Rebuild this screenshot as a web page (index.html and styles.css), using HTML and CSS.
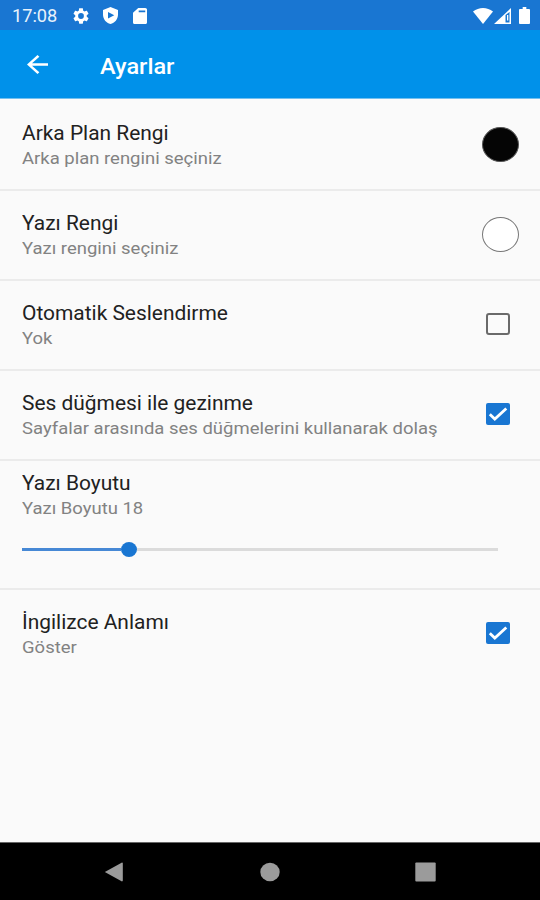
FILE: index.html
```html
<!DOCTYPE html>
<html lang="tr">
<head>
<meta charset="utf-8">
<title>Ayarlar</title>
<link rel="stylesheet" href="styles.css">
</head>
<body>
<div class="screen">
  <header class="status">
    <span class="clock"><span class="wide">17:08</span></span>
    <svg class="gear" viewBox="2 2 20 20" preserveAspectRatio="none"><path d="M19.14 12.94c.04-.3.06-.61.06-.94 0-.32-.02-.64-.07-.94l2.03-1.58c.18-.14.23-.41.12-.61l-1.92-3.32c-.12-.22-.37-.29-.59-.22l-2.39.96c-.5-.38-1.03-.7-1.62-.94l-.36-2.54c-.04-.24-.24-.41-.48-.41h-3.84c-.24 0-.43.17-.47.41l-.36 2.54c-.59.24-1.13.57-1.62.94l-2.39-.96c-.22-.08-.47 0-.59.22L2.74 8.87c-.12.21-.08.47.12.61l2.03 1.58c-.05.3-.09.63-.09.94s.02.64.07.94l-2.03 1.58c-.18.14-.23.41-.12.61l1.92 3.32c.12.22.37.29.59.22l2.39-.96c.5.38 1.03.7 1.62.94l.36 2.54c.05.24.24.41.48.41h3.84c.24 0 .44-.17.47-.41l.36-2.54c.59-.24 1.13-.56 1.62-.94l2.39.96c.22.08.47 0 .59-.22l1.92-3.32c.12-.22.07-.47-.12-.61zM12 15.6A3.6 3.6 0 1 1 12 8.400a3.600 3.600 0 0 1 0 7.200z"/></svg>
    <svg class="shield" viewBox="3 1 18 22" preserveAspectRatio="none"><path fill-rule="evenodd" d="M12 1 3 5v6c0 5.550 3.840 10.740 9 12 5.160-1.260 9-6.450 9-12V5zM9 7.500v8.500l7.500-4.250z"/></svg>
    <svg class="sd" viewBox="4 2 16 20" preserveAspectRatio="none"><path fill-rule="evenodd" d="M18 2h-8L4 8v12c0 1.100.9 2 2 2h12c1.100 0 2-.9 2-2V4c0-1.100-.9-2-2-2zM10.500 5h7.500v2.300h-7.500z"/></svg>
    <svg class="wifi" viewBox="0 0 20 16" preserveAspectRatio="none"><path d="M10 16 0 3.500Q4.500 0 10 0t10 3.500z"/></svg>
    <svg class="signal" viewBox="0 0 17 16" preserveAspectRatio="none"><path fill-rule="evenodd" d="M17 0v16H0zM11.500 7v7.500h4V4z"/><path d="M13 7h1.300v5.500H13z"/></svg>
    <svg class="battery" viewBox="0 0 12 17" preserveAspectRatio="none"><path d="M4 0h4v2h3q1 0 1 1v13q0 1-1 1H1q-1 0-1-1V3q0-1 1-1h3z"/></svg>
  </header>
  <nav class="appbar">
    <svg class="back" viewBox="4 4 16 16" preserveAspectRatio="none"><path d="M20 11H7.830l5.590-5.590L12 4l-8 8 8 8 1.410-1.410L7.830 13H20z"/></svg>
    <h1><span class="wide">Ayarlar</span></h1>
  </nav>
  <main class="settings">
    <section class="row">
      <div class="text"><div class="title wide">Arka Plan Rengi</div><div class="note wide">Arka plan rengini seçiniz</div></div>
      <span class="swatch black"></span>
    </section>
    <section class="row">
      <div class="text"><div class="title wide">Yazı Rengi</div><div class="note wide">Yazı rengini seçiniz</div></div>
      <span class="swatch white"></span>
    </section>
    <section class="row">
      <div class="text"><div class="title wide">Otomatik Seslendirme</div><div class="note wide">Yok</div></div>
      <span class="check"></span>
    </section>
    <section class="row">
      <div class="text"><div class="title wide">Ses düğmesi ile gezinme</div><div class="note wide">Sayfalar arasında ses düğmelerini kullanarak dolaş</div></div>
      <span class="check on"><svg viewBox="0 0 24 22"><path d="m3.800 11.200 5 4.800L20.300 5.500"/></svg></span>
    </section>
    <section class="row size">
      <div class="text"><div class="title wide">Yazı Boyutu</div><div class="note wide">Yazı Boyutu 18</div></div>
      <div class="slider"><span class="fill"></span><span class="thumb"></span><span class="rest"></span></div>
    </section>
    <section class="row">
      <div class="text"><div class="title wide">İngilizce Anlamı</div><div class="note wide">Göster</div></div>
      <span class="check on"><svg viewBox="0 0 24 22"><path d="m3.800 11.200 5 4.800L20.300 5.500"/></svg></span>
    </section>
  </main>
  <footer class="navbar">
    <svg width="20" height="20" viewBox="0 0 20 20"><path d="M.8 10 18 .6q.8 0 .8.800v17.200q0 .8-.8.800z"/></svg>
    <svg width="20" height="20" viewBox="0 0 20 20"><ellipse cx="10" cy="10" rx="9.700" ry="9.300"/></svg>
    <svg width="21" height="20" viewBox="0 0 21 20"><rect x=".3" y=".5" width="20.400" height="19" rx="1"/></svg>
  </footer>
</div>
</body>
</html>
```
FILE: styles.css
```css
* { box-sizing: border-box; }
body { margin: 0; font-family: Roboto, "Liberation Sans", sans-serif; }
.screen { width: 540px; height: 900px; display: flex; flex-direction: column; background: #fafafa; overflow: hidden; }
.wide { transform: scaleX(1.06); transform-origin: left center; white-space: nowrap; }
span.wide { display: inline-block; }

.status { height: 30px; flex: none; display: flex; align-items: center; background: #1976d2; color: #e8f1fb; padding: 1px 10px 0 12px; }
.status svg { fill: #fff; flex: none; }
.clock { width: 61px; font-size: 17.5px; line-height: 30px; }
.clock .wide { transform: scaleX(1.04); }
.gear { width: 16px; height: 16px; }
.shield { width: 15px; height: 17px; margin-left: 14px; }
.sd { width: 14px; height: 16px; margin-left: 15px; }
.wifi { width: 20px; height: 16px; margin-left: auto; }
.signal { width: 17px; height: 16px; margin-left: 1px; }
.battery { width: 11px; height: 17px; margin-left: 8px; }

.appbar { height: 69px; flex: none; display: flex; align-items: center; background: #0091ea; border-bottom: 1px solid #74c0ef; padding: 2px 0 0 27px; }
.back { width: 21px; height: 19px; fill: #fff; margin-bottom: 1px; }
h1 { margin: 3px 0 0 52px; font-size: 22px; line-height: 30px; font-weight: 500; color: #fff; }
h1 .wide { transform: scaleX(1.07); }

.settings { flex: 1; }
.row { height: 90px; display: flex; align-items: flex-start; justify-content: space-between; padding: 20px 20px 0 22px; border-top: 2px solid #ebebeb; }
.row:first-child { border-top-color: transparent; }
.title { font-size: 19.5px; line-height: 25px; color: #212121; }
.title.wide { transform: scaleX(1.073); }
.note { font-size: 17px; line-height: 25px; color: #828282; }
.note.wide { transform: scaleX(1.087); }
.swatch { width: 37px; height: 35px; border-radius: 50%; margin: 6px 1px 0 0; }
.black { background: #050505; border: 1px solid #555; }
.white { background: #fff; border: 1px solid #777; }
.check { width: 24px; height: 22px; margin: 12px 10px 0 0; border: 2px solid #6a6a6a; border-radius: 3px; }
.check.on { border: 0; background: #1976d2; border-radius: 2px; }
.check svg { display: block; width: 24px; height: 22px; fill: none; stroke: #fff; stroke-width: 2.8px; }
.row.size { height: 129px; flex-direction: column; justify-content: flex-start; padding-top: 10px; }
.slider { width: 476px; height: 16px; margin-top: 20px; display: flex; align-items: center; }
.fill { width: 99px; height: 3px; background: #4688d5; }
.thumb { width: 16px; height: 15px; border-radius: 50%; background: #1976d2; }
.rest { flex: 1; height: 3px; background: #dbdbdb; }

.navbar { height: 58px; flex: none; display: flex; align-items: center; justify-content: space-between; background: #000; border-top: 1px solid #666; padding: 0 104px; }
.navbar svg { fill: #9b9b9b; }
```
